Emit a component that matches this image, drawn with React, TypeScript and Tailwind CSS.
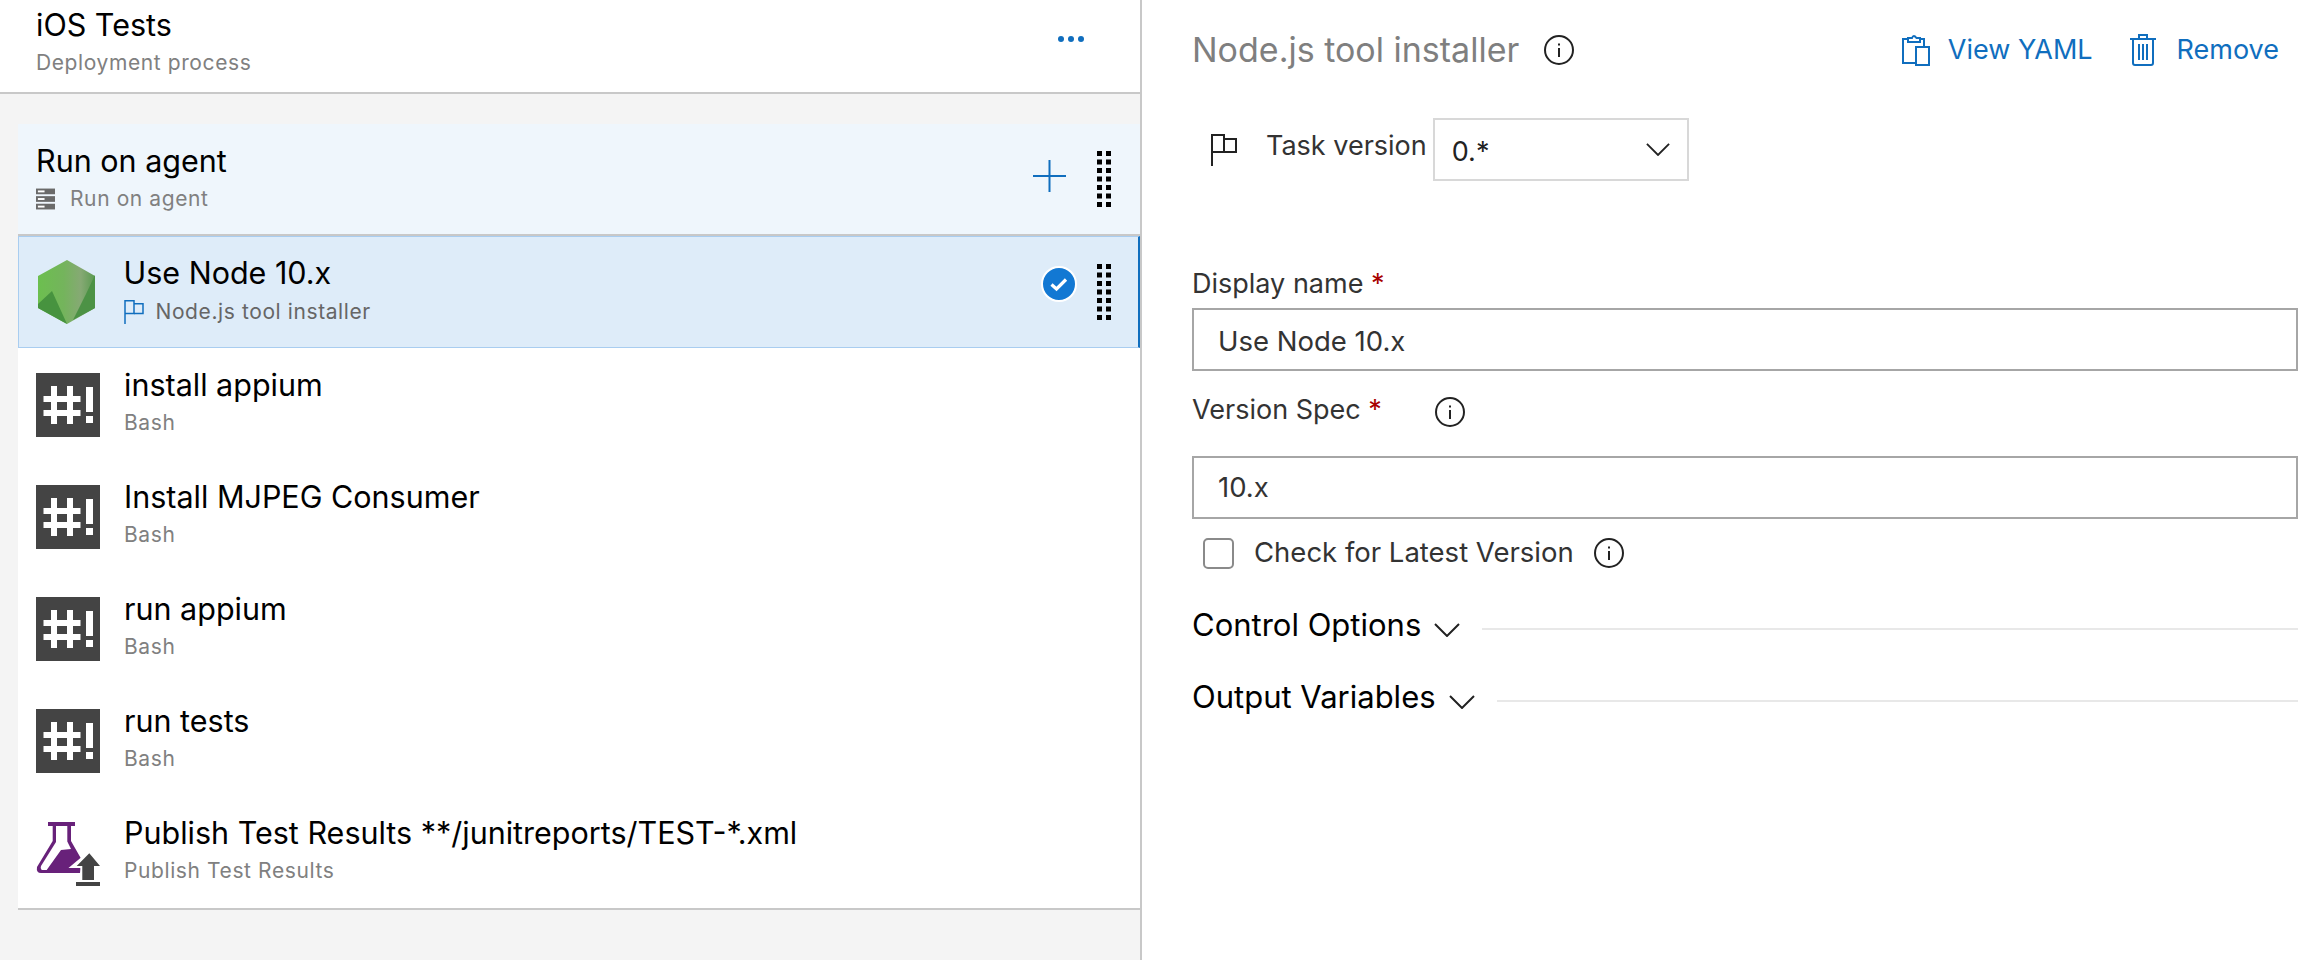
import React from "react";

const Info = ({ className = "" }: { className?: string }) => (
  <svg viewBox="0 0 30 30" className={`w-[30px] h-[30px] ${className}`} fill="none">
    <circle cx="15" cy="15" r="14" stroke="#222" strokeWidth="2" />
    <rect x="14" y="13" width="2" height="9" fill="#222" />
    <rect x="14" y="8.5" width="2" height="2" fill="#222" />
  </svg>
);

const Grip = () => (
  <svg viewBox="0 0 14 57" className="w-[14px] h-[57px]" fill="#000">
    {[0, 1, 2, 3, 4, 5, 6].map((i) => (
      <g key={i}>
        <rect x="0" y={i * 8.5} width="5" height="5" />
        <rect x="9" y={i * 8.5} width="5" height="5" />
      </g>
    ))}
  </svg>
);

const Flag = ({ color, className }: { color: string; className: string }) => (
  <svg viewBox="0 0 26 32" className={className} fill="none" stroke={color} strokeWidth="2">
    <path d="M1 32V1H13V18H1" />
    <path d="M13 5H25V18H13" />
  </svg>
);

const Bash = () => (
  <svg viewBox="0 0 64 64" className="w-[64px] h-[64px] shrink-0 mt-[2px]">
    <rect width="64" height="64" fill="#444444" />
    <g fill="#ffffff">
      <rect x="15" y="13" width="6" height="38" />
      <rect x="31" y="13" width="6" height="38" />
      <rect x="7.500" y="23" width="37" height="6" />
      <rect x="7.500" y="37" width="37" height="6" />
      <rect x="50" y="14" width="7" height="25" />
      <rect x="50" y="43" width="7" height="7" />
    </g>
  </svg>
);

const NodeIcon = () => (
  <svg viewBox="0 0 64 64" className="w-[64px] h-[64px] shrink-0">
    <defs>
      <linearGradient id="ng" x1="0" x2="1" y1="0" y2="0">
        <stop offset="0" stopColor="#6cbf4f" />
        <stop offset="0.45" stopColor="#74b45c" />
        <stop offset="0.75" stopColor="#86a974" />
        <stop offset="1" stopColor="#5a9a50" />
      </linearGradient>
    </defs>
    <path d="M32 0L60 16V48L32 64L3 48V16Z" fill="url(#ng)" />
    <path d="M3 44L17 31L32 64L3 48Z" fill="#47933f" />
    <path d="M60 15L51 34L38 60L60 48Z" fill="#4c9245" />
  </svg>
);

const Flask = () => (
  <svg viewBox="0 0 64 64" className="w-[64px] h-[64px] shrink-0 overflow-visible">
    <path d="M12 2H39V6H35V21L47 42L44 53H5Q0 53 1 47L16.700 21V6H12Z" fill="#68217a" />
    <path d="M20 6H31.300V21.500L35 29L25 30L10.700 50H5.700Q4 48 5 46L20 22Z" fill="#ffffff" />
    <path d="M53.300 33.300L66 46H58V60H46.300V46H38Z" fill="#ffffff" stroke="#ffffff" strokeWidth="4" />
    <path d="M53.300 33.300L64 46H58V60H46.300V46H40.700Z" fill="#444444" />
    <rect x="40" y="62" width="24" height="4" fill="#444444" />
  </svg>
);

const Chevron = ({ w, color = "#222" }: { w: number; color?: string }) => (
  <svg viewBox="0 0 26 14" style={{ width: w }} fill="none" stroke={color} strokeWidth="2">
    <path d="M1 1L13 13L25 1" />
  </svg>
);

const Row = ({ title, sub, icon }: { title: string; sub: string; icon: React.ReactNode }) => (
  <div className="h-[112px] flex items-center pl-[18px] pr-[32px] gap-[24px] bg-white">
    {icon}
    <div className="flex flex-col -mt-[4px]">
      <div className="text-[30.5px] leading-[38px] text-black">{title}</div>
      <div className="text-[21px] leading-[30px] mt-[4px] text-[#808080] tracking-[0.6px]">{sub}</div>
    </div>
  </div>
);

const Section = ({ title }: { title: string }) => (
  <div className="flex items-center h-[72px]">
    <span className="text-[31px] leading-[38px] text-black">{title}</span>
    <span className="ml-[13px] mr-[22px] mt-[10px] flex">
      <Chevron w={26} />
    </span>
    <div className="flex-1 h-[2px] bg-[#e8e8e8] mt-[8px]" />
  </div>
);

const Label = ({ text }: { text: string }) => (
  <span className="text-[27px] leading-[34px] text-[#333333]">
    {text} <span className="text-[#a80000]">*</span>
  </span>
);

const Field = ({ value, pad }: { value: string; pad: string }) => (
  <div className={`h-[63px] border-2 border-[#a6a6a6] flex items-center pl-[24px] text-[27.5px] text-[#333333] ${pad}`}>{value}</div>
);

export default function App() {
  return (
    <div className="w-[2320px] h-[960px] flex bg-white overflow-hidden font-['Inter','Liberation_Sans',sans-serif]">
      <div className="w-[1142px] h-full border-r-2 border-[#c8c8c8] bg-[#f4f4f4] flex flex-col shrink-0">
        <div className="h-[94px] bg-white border-b-2 border-[#c8c8c8] flex items-start justify-between pl-[36px] pr-[56px] shrink-0">
          <div className="flex flex-col">
            <div className="text-[30.5px] leading-[38px] text-black mt-[6px]">iOS Tests</div>
            <div className="text-[21px] leading-[28px] text-[#808080] mt-[5px] tracking-[0.6px]">Deployment process</div>
          </div>
          <div className="flex gap-[4px] mt-[36px]">
            <span className="w-[6px] h-[6px] rounded-full bg-[#106ebe]" />
            <span className="w-[6px] h-[6px] rounded-full bg-[#106ebe]" />
            <span className="w-[6px] h-[6px] rounded-full bg-[#106ebe]" />
          </div>
        </div>
        <div className="ml-[18px] mt-[30px] border-b-2 border-[#c8c8c8]">
          <div className="h-[112px] bg-[#eff6fc] border-b-2 border-[#c8c8c8] flex items-center pl-[18px] pr-[29px]">
            <div className="flex-1 flex flex-col -mt-[3px]">
              <div className="text-[30.5px] leading-[38px] text-black">Run on agent</div>
              <div className="flex items-center gap-[15px] mt-[4px]">
                <svg viewBox="0 0 20 22" className="w-[19px] h-[22px]">
                  <rect width="20" height="6" y="0" fill="#6a6a6a" />
                  <rect width="20" height="6" y="8" fill="#6a6a6a" />
                  <rect width="20" height="6" y="16" fill="#6a6a6a" />
                  <rect x="2" y="2" width="7" height="2" fill="#fff" />
                  <rect x="2" y="10" width="7" height="2" fill="#fff" />
                  <rect x="2" y="18" width="7" height="2" fill="#fff" />
                </svg>
                <span className="text-[21px] leading-[30px] text-[#808080] tracking-[0.6px]">Run on agent</span>
              </div>
            </div>
            <svg viewBox="0 0 33 32" className="w-[33px] h-[32px] mr-[31px] -mt-[6px]" fill="#106ebe">
              <rect x="15.500" y="0" width="2" height="32" />
              <rect x="0" y="15" width="33" height="2" />
            </svg>
            <Grip />
          </div>
          <div className="h-[112px] bg-[#deecf9] border-y-[1.5px] border-l-[1.5px] border-[#a9cdf0] border-r-[2px] border-r-[#106ebe] flex items-center pl-[16px] pr-[27px] gap-[24.5px]">
            <NodeIcon />
            <div className="flex-1 flex flex-col -mt-[4px]">
              <div className="text-[30.5px] leading-[38px] text-black">Use Node 10.x</div>
              <div className="flex items-center gap-[12px] mt-[5px]">
                <Flag color="#106ebe" className="w-[20px] h-[24px]" />
                <span className="text-[21px] leading-[30px] text-[#666666] tracking-[0.6px]">Node.js tool installer</span>
              </div>
            </div>
            <svg viewBox="0 0 36 36" className="w-[36px] h-[36px] mr-[-4px] -mt-[16px]">
              <circle cx="18" cy="18" r="17" fill="#1278d3" stroke="#fff" strokeWidth="2" />
              <path d="M10.5 18.5L15.5 23L25 13.5" fill="none" stroke="#fff" strokeWidth="3.2" />
            </svg>
            <Grip />
          </div>
          <Row title="install appium" sub="Bash" icon={<Bash />} />
          <Row title="Install MJPEG Consumer" sub="Bash" icon={<Bash />} />
          <Row title="run appium" sub="Bash" icon={<Bash />} />
          <Row title="run tests" sub="Bash" icon={<Bash />} />
          <Row title="Publish Test Results **/junitreports/TEST-*.xml" sub="Publish Test Results" icon={<Flask />} />
        </div>
      </div>
      <div className="flex-1 pl-[50px] pr-[22px] flex flex-col">
        <div className="h-[100px] flex items-center shrink-0">
          <span className="text-[34px] leading-[42px] text-[#7f7f7f]">Node.js tool installer</span>
          <Info className="ml-[25px]" />
          <div className="flex-1" />
          <div className="flex items-center gap-[18px] text-[#106ebe] text-[27px]">
            <svg viewBox="0 0 28 32" className="w-[28px] h-[32px]" fill="none" stroke="#106ebe" strokeWidth="2">
              <path d="M16 29H1V5H22V13" />
              <path d="M6 8V4H10Q11.500 0 14.500 4H18V8Z" fill="#fff" />
              <rect x="14" y="13" width="13" height="18" fill="#fff" />
            </svg>
            <span>View YAML</span>
          </div>
          <div className="flex items-center gap-[21px] text-[#106ebe] text-[27px] ml-[37px] mr-[19px]">
            <svg viewBox="0 0 26 32" className="w-[26px] h-[32px]" fill="none" stroke="#106ebe" strokeWidth="2">
              <path d="M0 5H26M9 5V1H17V5M3 5V29Q3 31 5 31H21Q23 31 23 29V5M9 10V26M13 10V26M17 10V26" />
            </svg>
            <span>Remove</span>
          </div>
        </div>
        <div className="flex items-center h-[63px] mt-[18px] pl-[19px]">
          <Flag color="#222222" className="w-[26px] h-[32px]" />
          <span className="ml-[29px] text-[27px] text-[#333333] -mt-[6px]">Task version</span>
          <div className="ml-[6px] w-[256px] h-[63px] border-2 border-[#d8d8d8] flex items-center justify-between pl-[17px] pr-[17px] text-[27px] text-[#222222]">
            <span className="mt-[6px]">0.*</span>
            <Chevron w={24} />
          </div>
        </div>
        <div className="mt-[78px] h-[49px] flex items-center"><Label text="Display name" /></div>
        <Field value="Use Node 10.x" pad="pt-[5px]" />
        <div className="h-[85px] flex items-center -mt-[3px] pb-[1px]">
          <Label text="Version Spec" />
          <Info className="ml-[53px] mt-[4px]" />
        </div>
        <div className="mt-[3px]"><Field value="10.x" pad="" /></div>
        <div className="flex items-center h-[68px] pl-[11px]">
          <div className="w-[31px] h-[31px] rounded-[5px] border-2 border-[#8a8a8a]" />
          <span className="ml-[20px] text-[27.5px] text-[#333333]">Check for Latest Version</span>
          <Info className="ml-[20px]" />
        </div>
        <div className="mt-[2px]"><Section title="Control Options" /></div>
        <Section title="Output Variables" />
      </div>
    </div>
  );
}
